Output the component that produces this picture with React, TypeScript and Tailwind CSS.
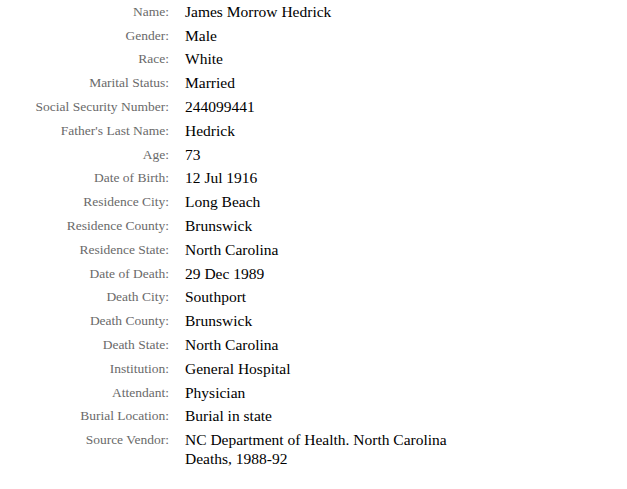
const rows: [string, string][] = [
  ["Name:", "James Morrow Hedrick"],
  ["Gender:", "Male"],
  ["Race:", "White"],
  ["Marital Status:", "Married"],
  ["Social Security Number:", "244099441"],
  ["Father's Last Name:", "Hedrick"],
  ["Age:", "73"],
  ["Date of Birth:", "12 Jul 1916"],
  ["Residence City:", "Long Beach"],
  ["Residence County:", "Brunswick"],
  ["Residence State:", "North Carolina"],
  ["Date of Death:", "29 Dec 1989"],
  ["Death City:", "Southport"],
  ["Death County:", "Brunswick"],
  ["Death State:", "North Carolina"],
  ["Institution:", "General Hospital"],
  ["Attendant:", "Physician"],
  ["Burial Location:", "Burial in state"],
  ["Source Vendor:", "NC Department of Health. North Carolina Deaths, 1988-92"],
];

export default function App() {
  return (
    <div className="min-h-screen bg-white pt-[1.8px] [font-family:'Liberation_Serif','Times_New_Roman',serif]">
      <div className="grid grid-cols-[169px_280px] gap-x-[16px] gap-y-[4.8px] items-start leading-[19px]">
        {rows.map(([label, value]) => (
          <div key={label} className="contents">
            <div className="text-right text-[13.5px] text-[#6a6a6a]">{label}</div>
            <div className="text-[15.5px] text-black">{value}</div>
          </div>
        ))}
      </div>
    </div>
  );
}
